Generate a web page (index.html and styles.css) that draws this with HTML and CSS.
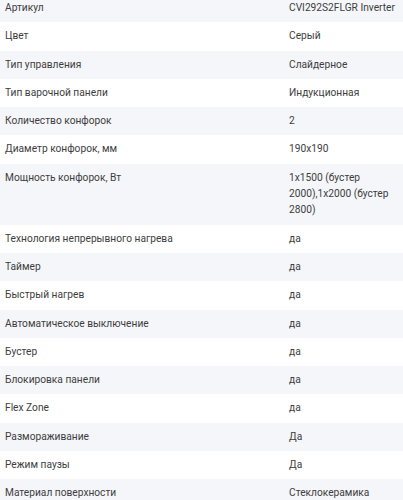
FILE: index.html
```html
<!DOCTYPE html>
<html lang="ru">
<head>
<meta charset="utf-8">
<link rel="stylesheet" href="styles.css">
</head>
<body>
<div class="specs">
  <div class="row"><div class="name">Артикул</div><div class="val">CVI292S2FLGR Inverter</div></div>
  <div class="row"><div class="name">Цвет</div><div class="val">Серый</div></div>
  <div class="row"><div class="name">Тип управления</div><div class="val">Слайдерное</div></div>
  <div class="row"><div class="name">Тип варочной панели</div><div class="val">Индукционная</div></div>
  <div class="row"><div class="name">Количество конфорок</div><div class="val">2</div></div>
  <div class="row"><div class="name">Диаметр конфорок, мм</div><div class="val">190x190</div></div>
  <div class="row"><div class="name">Мощность конфорок, Вт</div><div class="val">1x1500 (бустер 2000),1x2000 (бустер 2800)</div></div>
  <div class="row"><div class="name">Технология непрерывного нагрева</div><div class="val">да</div></div>
  <div class="row"><div class="name">Таймер</div><div class="val">да</div></div>
  <div class="row"><div class="name">Быстрый нагрев</div><div class="val">да</div></div>
  <div class="row"><div class="name">Автоматическое выключение</div><div class="val">да</div></div>
  <div class="row"><div class="name">Бустер</div><div class="val">да</div></div>
  <div class="row"><div class="name">Блокировка панели</div><div class="val">да</div></div>
  <div class="row"><div class="name">Flex Zone</div><div class="val">да</div></div>
  <div class="row"><div class="name">Размораживание</div><div class="val">Да</div></div>
  <div class="row"><div class="name">Режим паузы</div><div class="val">Да</div></div>
  <div class="row"><div class="name">Материал поверхности</div><div class="val">Стеклокерамика</div></div>
</div>
</body>
</html>
```
FILE: styles.css
```css
html, body {
  margin: 0;
  padding: 0;
  background: #ffffff;
}
body {
  font-family: Roboto, "Noto Sans", sans-serif;
  font-size: 10.2px;
  color: #3d3d3d;
  overflow: hidden;
  font-feature-settings: "calt" 0;
}
.specs {
  margin-top: -6px;
}
.row {
  display: grid;
  grid-template-columns: 284px 1fr;
  padding: 6px 5px;
  line-height: 16.3px;
}
.row:nth-child(odd) {
  background: #f5f6f9;
}
```
